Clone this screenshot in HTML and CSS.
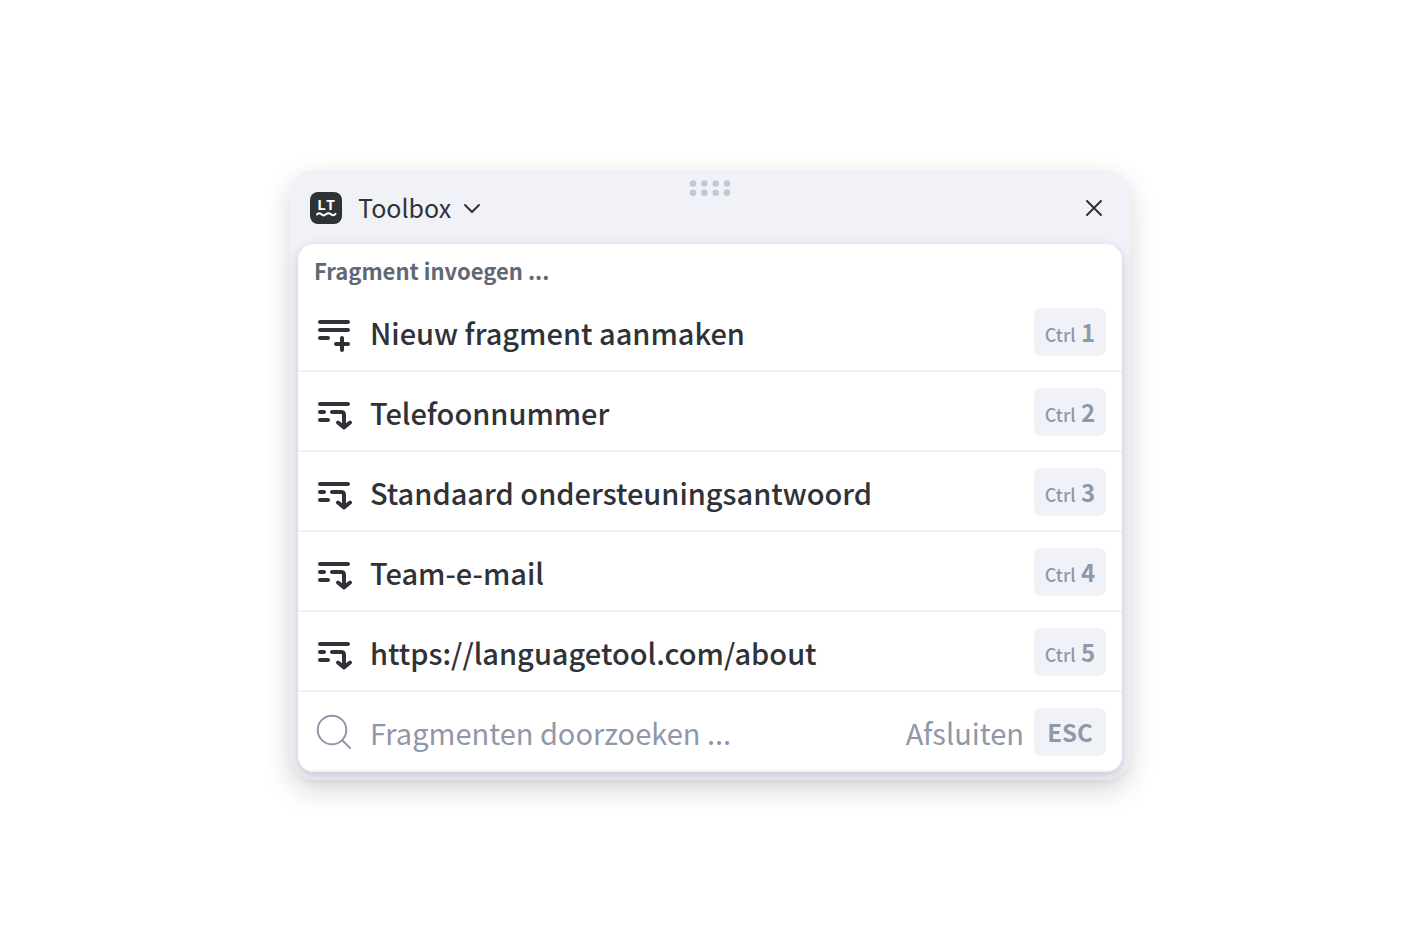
FILE: index.html
```
<!DOCTYPE html>
<html lang="nl">
<head>
  <meta charset="UTF-8" />
  <meta name="viewport" content="width=device-width, initial-scale=1.0" />
  <title>Toolbox</title>
  <link rel="stylesheet" href="styles.css">
</head>
<body>

  <!-- Shared icons -->
  <svg class="sprite" aria-hidden="true">
    <symbol id="icon-new" viewBox="0 0 40 40">
      <path d="M6 10H34M6 18H34M6 26H14M22 32H34M28 26V38" />
    </symbol>
    <symbol id="icon-insert" viewBox="0 0 40 40">
      <path d="M6 12H34M6 20H10M6 28H14M18 20H27Q30 20 30 23V35.500M24 30.500L30 35.500L36 30.500" />
    </symbol>
  </svg>

  <main class="toolbox">
    <!-- Drag handle -->
    <svg class="drag-handle" viewBox="0 0 42 16" aria-hidden="true">
      <circle cx="4" cy="3.500" r="3.300" /><circle cx="15.300" cy="3.500" r="3.300" />
      <circle cx="26.700" cy="3.500" r="3.300" /><circle cx="38" cy="3.500" r="3.300" />
      <circle cx="4" cy="12.700" r="3.300" /><circle cx="15.300" cy="12.700" r="3.300" />
      <circle cx="26.700" cy="12.700" r="3.300" /><circle cx="38" cy="12.700" r="3.300" />
    </svg>

    <!-- Header -->
    <header class="toolbox-header">
      <svg class="logo" viewBox="0 0 32 32" aria-hidden="true">
        <rect width="32" height="32" rx="8" fill="#2f3237" />
        <text x="16" y="18" text-anchor="middle">LT</text>
        <path d="M7 22.500C8.300 21 10 21 11.300 22.300S14.300 23.800 16 22.300S19.500 21 21 22.300S24 23.800 25.500 21.800" />
      </svg>
      <button type="button" class="menu-button">
        Toolbox
        <svg class="chevron" viewBox="0 0 18 12" aria-hidden="true"><path d="M2 3L9 10L16 3" /></svg>
      </button>
      <button type="button" class="close-button" aria-label="Sluiten">
        <svg viewBox="0 0 20 20" aria-hidden="true"><path d="M3 3L17 17M17 3L3 17" /></svg>
      </button>
    </header>

    <!-- Snippet list -->
    <section class="panel">
      <h2>Fragment invoegen ...</h2>
      <ul class="snippets">
        <li>
          <button type="button" class="row">
            <svg class="icon"><use href="#icon-new" /></svg>
            <span class="row-label">Nieuw fragment aanmaken</span>
            <kbd><small>Ctrl</small> 1</kbd>
          </button>
        </li>
        <li>
          <button type="button" class="row">
            <svg class="icon"><use href="#icon-insert" /></svg>
            <span class="row-label">Telefoonnummer</span>
            <kbd><small>Ctrl</small> 2</kbd>
          </button>
        </li>
        <li>
          <button type="button" class="row">
            <svg class="icon"><use href="#icon-insert" /></svg>
            <span class="row-label">Standaard ondersteuningsantwoord</span>
            <kbd><small>Ctrl</small> 3</kbd>
          </button>
        </li>
        <li>
          <button type="button" class="row">
            <svg class="icon"><use href="#icon-insert" /></svg>
            <span class="row-label">Team-e-mail</span>
            <kbd><small>Ctrl</small> 4</kbd>
          </button>
        </li>
        <li>
          <button type="button" class="row">
            <svg class="icon"><use href="#icon-insert" /></svg>
            <span class="row-label">https://languagetool.com/about</span>
            <kbd><small>Ctrl</small> 5</kbd>
          </button>
        </li>
      </ul>

      <!-- Search -->
      <div class="row search-row">
        <label for="search" aria-label="Fragmenten doorzoeken">
          <svg class="icon icon-search" viewBox="0 0 40 40" aria-hidden="true">
            <circle cx="18" cy="18" r="14.300" /><path d="M28.500 28.500L36 36" />
          </svg>
        </label>
        <input type="text" id="search" placeholder="Fragmenten doorzoeken ...">
        <button type="button" class="exit-button">Afsluiten <kbd>ESC</kbd></button>
      </div>
    </section>
  </main>

</body>
</html>
```
FILE: styles.css
```
/* Base styling */
* {
  box-sizing: border-box;
}
body {
  margin: 0;
  min-height: 100vh;
  padding: 24px 24px 26px;
  display: flex;
  align-items: center;
  justify-content: center;
  background: #fff;
  color: #2f3237;
  font-family: "Source Sans Pro", "Noto Sans CJK SC", sans-serif;
}
button,
input {
  border: none;
  padding: 0;
  background: none;
  color: inherit;
  font: inherit;
}
button {
  cursor: pointer;
}
svg {
  display: block;
  flex: none;
  fill: none;
  stroke: currentColor;
  stroke-linecap: round;
  stroke-linejoin: round;
}
.sprite {
  position: absolute;
  width: 0;
  height: 0;
}
/* Toolbox window */
.toolbox {
  position: relative;
  width: 100%;
  max-width: 840px;
  padding: 0 8px 8px;
  border-radius: 24px;
  background: #f1f2f8;
  box-shadow: 0 10px 28px rgba(0, 0, 0, 0.16);
}
.drag-handle {
  position: absolute;
  top: 10px;
  left: 50%;
  width: 42px;
  height: 16px;
  margin-left: -21px;
  fill: #c1c8d6;
  stroke: none;
}
/* Header styling */
.toolbox-header {
  display: flex;
  align-items: center;
  padding: 18px 8px 16px 12px;
}
.logo {
  width: 32px;
  height: 32px;
  stroke: none;
}
.logo text {
  fill: #fff;
  font-family: "Liberation Mono", monospace;
  font-size: 15px;
  font-weight: 700;
}
.logo path {
  stroke: #fff;
  stroke-width: 2;
}
.menu-button {
  display: flex;
  align-items: center;
  gap: 12px;
  margin-left: 16px;
  font-size: 25px;
  line-height: 38px;
  padding-bottom: 2px;
}
.chevron {
  width: 18px;
  height: 12px;
  margin-top: 2px;
  stroke-width: 2;
}
.close-button {
  margin-left: auto;
  padding: 10px;
}
.close-button svg {
  width: 20px;
  height: 20px;
  stroke-width: 2;
}
/* White panel */
.panel {
  border-radius: 16px;
  background: #fff;
  box-shadow: 0 4px 12px rgba(60, 64, 90, 0.24);
  overflow: hidden;
}
.panel h2 {
  margin: 0;
  padding: 6px 16px 2px;
  color: #616874;
  font-size: 22px;
  font-weight: 700;
  line-height: 40px;
}
.snippets {
  margin: 0;
  padding: 0;
  list-style: none;
}
.row {
  display: flex;
  align-items: center;
  gap: 16px;
  width: 100%;
  padding: 16px 16px 14px;
  border-bottom: 2px solid #f1f2f8;
  font-size: 29px;
  line-height: 48px;
  text-align: left;
}
.row-label {
  flex: 1;
  font-weight: 500;
}
.icon {
  width: 40px;
  height: 40px;
  stroke-width: 4;
}
.icon-search {
  stroke-width: 2;
}
/* Shortcut keys */
kbd {
  flex: none;
  width: 72px;
  height: 48px;
  border-radius: 8px;
  background: #f1f2f8;
  color: #8f98a8;
  font-family: inherit;
  font-size: 24px;
  font-weight: 700;
  line-height: 48px;
  text-align: center;
}
kbd small {
  font-size: 18px;
  font-weight: 500;
}
/* Search row */
.search-row {
  color: #8f98a8;
}
.search-row input {
  flex: 1;
  min-width: 0;
  height: 48px;
  outline: none;
}
.search-row input::placeholder {
  color: #8f98a8;
  opacity: 1;
}
.exit-button {
  display: flex;
  align-items: center;
  gap: 10px;
}
```
